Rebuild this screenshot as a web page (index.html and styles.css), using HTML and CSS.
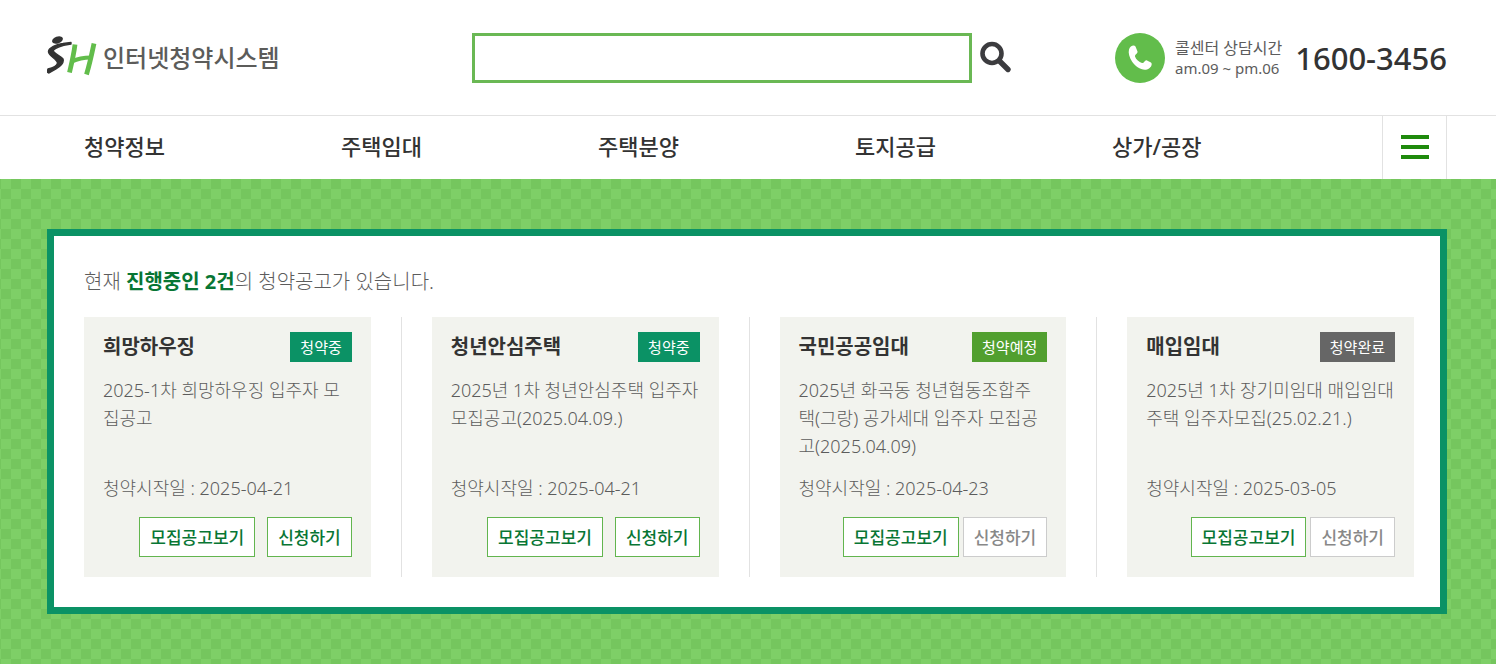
FILE: index.html
```html
<!DOCTYPE html>
<html lang="ko">
<head>
<meta charset="utf-8">
<title>SH 인터넷청약시스템</title>
<link rel="stylesheet" href="styles.css">
</head>
<body>
<header class="header">
  <a class="logo" href="#">
    <svg class="logo-mark" width="50" height="46" viewBox="0 0 50 46" aria-label="SH">
      <ellipse cx="10.500" cy="5" rx="5.600" ry="3.400" transform="rotate(-20 10.500 5)" fill="#333"/>
      <path d="M24 9C18 10 10 11 6.500 15C5 18 13 20 16 24C17 27 14 31 9 34L2 38L0 37L1 34C5 33 10 31 10.500 28C10 24 2 21 1.500 17C1 13 10 9 16 8.500L24 7.500Z" fill="#333" stroke="#333" stroke-width="1.400" stroke-linejoin="round"/>
      <path d="M28 9.500C27 18 25 27 22.500 37.500M47 8.500C45 18 43 28 39.500 39.500" fill="none" stroke="#62bd4b" stroke-width="4.800"/>
      <path d="M25 26.500C31 23.500 37 22.500 44 22.500" fill="none" stroke="#62bd4b" stroke-width="4"/>
    </svg>
    <span class="logo-text">인터넷청약시스템</span>
  </a>
  <form class="search">
    <input class="search-input" type="text" aria-label="검색어">
    <button class="search-button" type="button" aria-label="검색">
      <svg width="32" height="34" viewBox="0 0 32 34"><circle cx="12" cy="12.500" r="9.500" fill="none" stroke="#3c3c3f" stroke-width="4.600"/><path d="M19.500 20L28 28.500" stroke="#3c3c3f" stroke-width="5.400" stroke-linecap="round"/></svg>
    </button>
  </form>
  <div class="call">
    <svg class="call-icon" width="50" height="50" viewBox="0 0 50 50"><circle cx="25" cy="25" r="25" fill="#62bd4b"/><path d="M14 16.500C15 13 19 11.500 20.500 13.500L22.500 18.500C23 20.500 19.500 21.500 20 23.500C21 26.500 24 29 27 30C29 30.500 29.500 27 31.500 27.200L36 29.500C38 31.500 35.500 35.500 32 36.500C27 38 20 33.500 17 28.500C14.500 24.500 13 20 14 16.500Z" fill="#fff"/></svg>
    <div class="call-hours"><span class="call-label">콜센터 상담시간</span><span class="call-time">am.09 ~ pm.06</span></div>
    <strong class="call-number">1600-3456</strong>
  </div>
</header>
<nav class="nav">
  <ul class="nav-list">
    <li><a href="#">청약정보</a></li>
    <li><a href="#">주택임대</a></li>
    <li><a href="#">주택분양</a></li>
    <li><a href="#">토지공급</a></li>
    <li><a href="#">상가/공장</a></li>
  </ul>
  <button class="menu-button" type="button" aria-label="전체메뉴"><span></span><span></span><span></span></button>
</nav>
<main class="stage">
  <section class="panel">
    <h1 class="summary">현재 <strong>진행중인 2건</strong>의 청약공고가 있습니다.</h1>
    <div class="cards">
      <article class="card">
        <div class="card-head"><h2>희망하우징</h2><span class="badge">청약중</span></div>
        <p class="desc">2025-1차 희망하우징 입주자 모집공고</p>
        <p class="date">청약시작일 : 2025-04-21</p>
        <div class="actions"><button class="btn" type="button">모집공고보기</button><button class="btn" type="button">신청하기</button></div>
      </article>
      <div class="divider"></div>
      <article class="card">
        <div class="card-head"><h2>청년안심주택</h2><span class="badge">청약중</span></div>
        <p class="desc">2025년 1차 청년안심주택 입주자모집공고(2025.04.09.)</p>
        <p class="date">청약시작일 : 2025-04-21</p>
        <div class="actions"><button class="btn" type="button">모집공고보기</button><button class="btn" type="button">신청하기</button></div>
      </article>
      <div class="divider"></div>
      <article class="card">
        <div class="card-head"><h2>국민공공임대</h2><span class="badge badge-planned">청약예정</span></div>
        <p class="desc">2025년 화곡동 청년협동조합주택(그랑) 공가세대 입주자 모집공고(2025.04.09)</p>
        <p class="date">청약시작일 : 2025-04-23</p>
        <div class="actions actions-tight"><button class="btn" type="button">모집공고보기</button><button class="btn btn-off" type="button">신청하기</button></div>
      </article>
      <div class="divider"></div>
      <article class="card">
        <div class="card-head"><h2>매입임대</h2><span class="badge badge-done">청약완료</span></div>
        <p class="desc">2025년 1차 장기미임대 매입임대주택 입주자모집(25.02.21.)</p>
        <p class="date">청약시작일 : 2025-03-05</p>
        <div class="actions actions-tight"><button class="btn" type="button">모집공고보기</button><button class="btn btn-off" type="button">신청하기</button></div>
      </article>
    </div>
  </section>
</main>
</body>
</html>
```
FILE: styles.css
```css
* { box-sizing: border-box; }
body, h1, h2, p, ul { margin: 0; padding: 0; }
body { background: #fff; color: #5c5c5c; font-family: "Noto Sans", "Noto Sans CJK KR", sans-serif; }
button, input { font-family: inherit; }
a { color: inherit; text-decoration: none; }

.header { display: grid; grid-template-columns: 1fr auto 1fr; align-items: center; height: 115px; padding: 0 49px 0 47px; }
.logo { display: flex; align-items: center; gap: 6px; }
.logo-text { color: #5c5c5a; font-size: 24px; font-weight: 500; line-height: 32px; white-space: nowrap; }
.search { display: flex; align-items: center; gap: 8px; width: 550px; }
.search-input { width: 500px; height: 50px; padding: 0 12px; border: 3px solid #6ab854; background: #fff; font-size: 18px; }
.search-button { display: flex; padding: 0; border: 0; background: none; }
.call { display: flex; align-items: center; justify-content: flex-end; white-space: nowrap; }
.call-icon { flex: none; margin-right: 10px; }
.call-hours { display: flex; flex-direction: column; margin-right: 13px; font-size: 16px; line-height: 20px; }
.call-time { font-size: 15px; }
.call-number { color: #333; font-size: 31px; font-weight: 500; line-height: 40px; }

.nav { display: flex; height: 64px; padding: 0 49px 0 47px; border-top: 1px solid #e2e2e2; }
.nav-list { display: flex; flex: 1; padding: 0 13px 0 37px; list-style: none; }
.nav-list li { flex: 1; }
.nav-list a { color: #333; font-size: 22px; font-weight: 500; line-height: 60px; }
.menu-button { display: flex; flex-direction: column; align-items: center; justify-content: center; gap: 6px; width: 65px; padding: 0 0 1px; border: 0 solid #e2e2e2; border-width: 0 1px; background: none; }
.menu-button span { width: 28px; height: 4px; background: #1f8a0d; }

.stage { padding: 50px 49px 50px 47px; background: repeating-conic-gradient(#75c65e 0 25%, #7ecf67 0 50%) 1px 0 / 20px 20px; }
.panel { padding: 30px 26px 30px 30px; border: 7px solid #0b9265; background: #fff; }
.summary { margin-bottom: 19px; font-size: 20px; font-weight: 300; line-height: 32px; }
.summary strong { color: #087634; font-weight: 700; }
.cards { display: flex; gap: 30px; }
.divider { width: 1px; background: #e2e2e2; }
.card { display: flex; flex: 1; flex-direction: column; min-width: 0; min-height: 260px; padding: 15px 19px 20px; background: #f2f3ee; }
.card-head { display: flex; align-items: center; justify-content: space-between; }
.card-head h2 { color: #333; font-size: 20px; font-weight: 700; line-height: 30px; }
.badge { padding: 0 10px; background: #0b9265; color: #fff; font-size: 15px; line-height: 30px; }
.badge-planned { background: #519f2f; }
.badge-done { background: #666; }
.desc { min-height: 84px; margin: 14px 0; font-size: 18px; font-weight: 300; line-height: 28px; word-break: break-all; }
.date { font-size: 18px; font-weight: 300; line-height: 28px; }
.actions { display: flex; justify-content: flex-end; gap: 12px; margin-top: auto; }
.actions-tight { gap: 4px; }
.btn { height: 40px; padding: 0 10px 2px; border: 1px solid #62b54e; background: #fff; color: #087634; font-size: 17px; font-weight: 500; white-space: nowrap; }
.btn-off { border-color: #ccc; color: #888; }
```
